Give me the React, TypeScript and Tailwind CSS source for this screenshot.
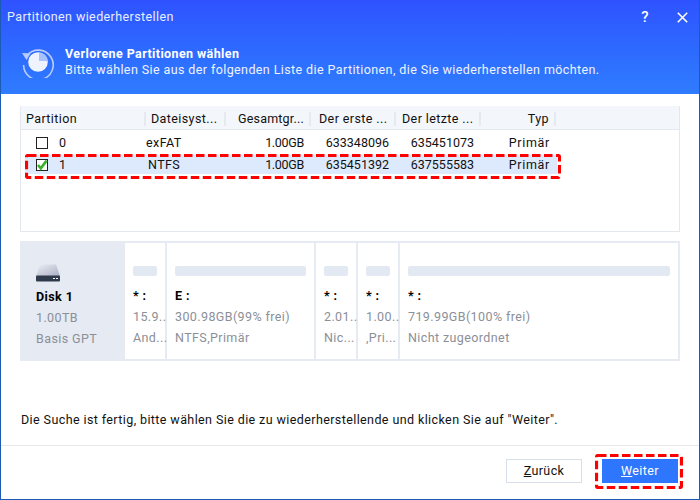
import React from "react";

const font = { fontFamily: "Roboto, 'Liberation Sans', sans-serif" };

function Dash({ w, h }: { w: number; h: number }) {
  return (
    <svg width={w} height={h} className="absolute pointer-events-none left-0 top-0">
      <rect x="1.5" y="1.5" width={w - 3} height={h - 3} rx="1.5" fill="none" stroke="#ff0000" strokeWidth="3.2" strokeDasharray="8.5 3.5" />
    </svg>
  );
}

function RestoreIcon() {
  return (
    <svg width="32" height="33" viewBox="0 0 32 33" fill="none" className="block shrink-0">
      <path d="M5 10.5A14.8 14.8 0 1 1 1.6 20" stroke="#b9ccff" strokeWidth="1.6" fill="none" />
      <path d="M0 8 L8.5 8.5 L4.5 15 Z" fill="#b9ccff" />
      <circle cx="16" cy="17" r="9.8" fill="#eef3ff" />
      <path d="M17 7.2 A9.8 9.8 0 0 1 25.8 16 L17 16 Z" fill="#a9c2ff" />
    </svg>
  );
}

function DiskIcon() {
  return (
    <svg width="24" height="18" viewBox="0 0 24 18" className="block">
      <defs>
        <linearGradient id="d" x1="0" y1="0" x2="1" y2="1">
          <stop offset="0" stopColor="#eceff6" />
          <stop offset="1" stopColor="#a9aec2" />
        </linearGradient>
      </defs>
      <path d="M4 0.5 H20 L24 12 H0 Z" fill="url(#d)" />
      <rect x="0" y="11.5" width="24" height="6" rx="1" fill="#2f3a4d" />
      <rect x="17" y="14" width="2" height="1" fill="#fff" />
      <rect x="20" y="14" width="2" height="1" fill="#fff" />
    </svg>
  );
}

function Check({ checked }: { checked?: boolean }) {
  return (
    <div className="w-3 h-3 border border-[#222] bg-white relative shrink-0">
      {checked && (
        <svg width="12" height="12" viewBox="0 0 12 12" className="absolute -left-px -top-px">
          <path d="M2 6 L4.8 9.4 L10.6 1.6" fill="none" stroke="#3bb02a" strokeWidth="2.6" />
        </svg>
      )}
    </div>
  );
}

function HeadCell({ children, cls }: { children: React.ReactNode; cls: string }) {
  return (
    <div className={`flex items-center h-[14px] border-r-2 border-[#e6eaf0] ${cls}`}>
      <span className="whitespace-nowrap">{children}</span>
    </div>
  );
}

function Row({ id, fs, a, b, checked, fsPl }: { id: string; fs: string; a: string; b: string; checked?: boolean; fsPl: string }) {
  return (
    <div className={`grid grid-cols-[121px_80px_85px_85px_85px_76px] h-[19px] pt-px items-center w-[532px] ${checked ? "bg-[#ddeafd]" : ""}`}>
      <div className="flex items-center pl-[11px] gap-[11px]">
        <Check checked={checked} />
        <span className="tracking-normal">{id}</span>
      </div>
      <div className={fsPl}>{fs}</div>
      <div className="text-right pr-[7px] tracking-[-0.3px]">1.00GB</div>
      <div className="text-right pr-[7px] tracking-normal">{a}</div>
      <div className="text-right pr-[7px] tracking-normal">{b}</div>
      <div className="text-right pr-[7px] tracking-[0.7px]">Primär</div>
    </div>
  );
}

function Part({ w, name, l1, l2, grow }: { w?: string; name: string; l1: string; l2: string; grow?: boolean }) {
  return (
    <div className={`bg-white h-full px-2 pt-[23px] ${grow ? "flex-1" : w}`}>
      <div className="h-[10px] rounded-[2px] bg-[#e3e9f3]" />
      <div className="mt-[12px] h-[16px] leading-[16px] font-bold text-black">{name}</div>
      <div className="mt-[5px] h-[16px] leading-[16px] text-[#8b8f98] whitespace-nowrap">{l1}</div>
      <div className="mt-[5px] h-[16px] leading-[16px] text-[#8b8f98] whitespace-nowrap">{l2}</div>
    </div>
  );
}

export default function App() {
  return (
    <div className="w-[700px] h-[500px] relative flex flex-col bg-white border-x border-b border-[#1c5bb5] text-[12.5px] tracking-[0.4px] text-[#111]" style={font}>
      <div className="h-[94px] shrink-0 bg-gradient-to-b from-[#2f52ff] to-[#2f7cff] text-white relative">
        <div className="flex items-center justify-between h-[34px] pl-[6px] pr-[11px]">
          <span className="text-[#e8eeff]">Partitionen wiederherstellen</span>
          <div className="flex items-center gap-[28px]">
            <span className="text-[15px] font-medium">?</span>
            <svg width="11" height="11" viewBox="0 0 11 11"><path d="M0.8 0.8 L10.2 10.2 M10.2 0.8 L0.8 10.2" stroke="#fff" strokeWidth="1.6" /></svg>
          </div>
        </div>
        <div className="flex items-start pl-[21px] mt-[11px]">
          <RestoreIcon />
          <div className="ml-[11px] leading-[16px] mt-[1px]">
            <div className="font-bold h-[16px]">Verlorene Partitionen wählen</div>
            <div className="h-[16px] text-[#eef3ff]">Bitte wählen Sie aus der folgenden Liste die Partitionen, die Sie wiederherstellen möchten.</div>
          </div>
        </div>
      </div>

      <div className="mt-[12px] ml-[19px] w-[660px] h-[126px] shrink-0 border-x border-b border-[#e3e7ee] relative">
        <div className="grid grid-cols-[125px_80px_85px_85px_85px_75px] h-[24px] pt-[3px] items-center bg-[#f3f6fa] border-b border-[#e3e7ee] w-full">
          <HeadCell cls="pl-[5px]">Partition</HeadCell>
          <HeadCell cls="pl-[5px]">Dateisyst...</HeadCell>
          <HeadCell cls="justify-end pr-[5px] tracking-[0.2px]">Gesamtgr...</HeadCell>
          <HeadCell cls="pl-[8px]">Der erste ...</HeadCell>
          <HeadCell cls="pl-[6px]">Der letzte ...</HeadCell>
          <HeadCell cls="justify-end pr-[5px]">Typ</HeadCell>
        </div>
        <div className="pt-[3px] flex flex-col gap-[3px] pl-[4px]">
          <Row id="0" fs="exFAT" a="633348096" b="635451073" fsPl="" />
          <Row id="1" fs="NTFS" a="635451392" b="637555583" checked fsPl="pl-[2px]" />
        </div>
        <div className="absolute left-[4px] top-[48px] w-[536px] h-[25px]">
          <Dash w={536} h={25} />
        </div>
      </div>

      <div className="mt-[9px] ml-[19px] w-[660px] h-[120px] shrink-0 flex gap-[2px] bg-[#e6eaf2] border-2 border-l-0 border-[#e6eaf2]">
        <div className="w-[103px] shrink-0 pl-[16px] pt-[21px]">
          <DiskIcon />
          <div className="mt-[7px] h-[16px] leading-[16px] font-bold text-black">Disk 1</div>
          <div className="mt-[5px] h-[16px] leading-[16px] text-[#8b8f98]">1.00TB</div>
          <div className="mt-[5px] h-[16px] leading-[16px] text-[#8b8f98]">Basis GPT</div>
        </div>
        <Part w="w-[40px]" name="* :" l1="15.9..." l2="And..." />
        <Part w="w-[147px]" name="E :" l1="300.98GB(99% frei)" l2="NTFS,Primär" />
        <Part w="w-[40px]" name="* :" l1="2.01..." l2="Nic..." />
        <Part w="w-[40px]" name="* :" l1="1.00..." l2=",Pri..." />
        <Part grow name="* :" l1="719.99GB(100% frei)" l2="Nicht zugeordnet" />
      </div>

      <div className="mt-[41px] pl-[20px] h-[36px] shrink-0 leading-[36px] text-[#111]">Die Suche ist fertig, bitte wählen Sie die zu wiederherstellende und klicken Sie auf "Weiter".</div>

      <div className="mt-[7px] border-t border-[#e6e8ec] flex-1 flex justify-end items-start pt-[13px] pr-[21px] gap-[20px]">
        <button className="w-[76px] h-[24px] border border-[#d9dfe8] bg-white text-[#111] flex items-center justify-center"><span><span className="underline">Z</span>urück</span></button>
        <button className="w-[76px] h-[24px] bg-[#2f76ff] text-white flex items-center justify-center relative">
          <span><span className="underline">W</span>eiter</span>
          <span className="absolute left-[-7px] top-[-5px] w-[88px] h-[35px]"><Dash w={88} h={35} /></span>
        </button>
      </div>
    </div>
  );
}
